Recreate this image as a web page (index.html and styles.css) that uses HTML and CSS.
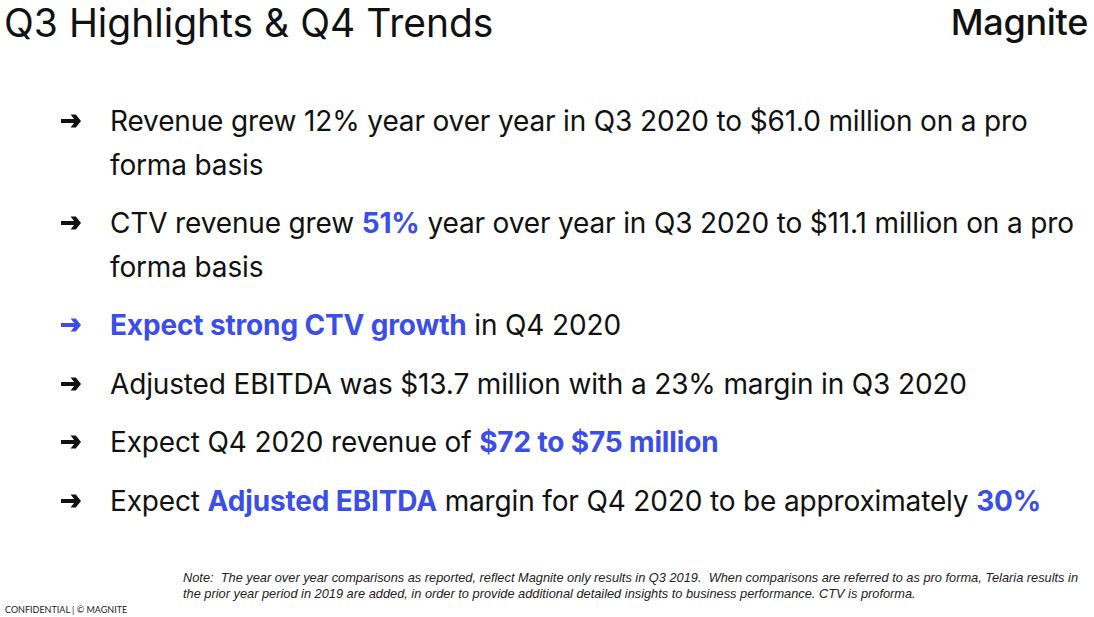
FILE: index.html
```html
<!DOCTYPE html>
<html lang="en">
<head>
<meta charset="utf-8">
<title>Q3 Highlights &amp; Q4 Trends</title>
<link rel="stylesheet" href="styles.css">
</head>
<body>
<div class="slide">
  <header class="header">
    <h1 class="title">Q3 Highlights &amp; Q4 Trends</h1>
    <div class="logo">Magnite</div>
  </header>
  <ul class="bullets">
    <li class="item">
      <svg class="arrow" viewBox="0 0 20 14"><path d="M0 5.1h13.2V0.6h1.6L20 7l-5.2 6.4h-1.6V8.9H0z M9.6 0.6h4.2L19.4 7l-5.6 6.4H9.6L14.6 7z" fill="currentColor"/></svg>
      <span class="text">Revenue grew 12% year over year in Q3 2020 to $61.0 million on a pro forma basis</span>
    </li>
    <li class="item">
      <svg class="arrow" viewBox="0 0 20 14"><path d="M0 5.1h13.2V0.6h1.6L20 7l-5.2 6.4h-1.6V8.9H0z M9.6 0.6h4.2L19.4 7l-5.6 6.4H9.6L14.6 7z" fill="currentColor"/></svg>
      <span class="text">CTV revenue grew <b class="hl">51%</b> year over year in Q3 2020 to $11.1 million on a pro forma basis</span>
    </li>
    <li class="item">
      <svg class="arrow blue" viewBox="0 0 20 14"><path d="M0 5.1h13.2V0.6h1.6L20 7l-5.2 6.4h-1.6V8.9H0z M9.6 0.6h4.2L19.4 7l-5.6 6.4H9.6L14.6 7z" fill="currentColor"/></svg>
      <span class="text"><b class="hl">Expect strong CTV growth</b> in Q4 2020</span>
    </li>
    <li class="item">
      <svg class="arrow" viewBox="0 0 20 14"><path d="M0 5.1h13.2V0.6h1.6L20 7l-5.2 6.4h-1.6V8.9H0z M9.6 0.6h4.2L19.4 7l-5.6 6.4H9.6L14.6 7z" fill="currentColor"/></svg>
      <span class="text">Adjusted EBITDA was $13.7 million with a 23% margin in Q3 2020</span>
    </li>
    <li class="item">
      <svg class="arrow" viewBox="0 0 20 14"><path d="M0 5.1h13.2V0.6h1.6L20 7l-5.2 6.4h-1.6V8.9H0z M9.6 0.6h4.2L19.4 7l-5.6 6.4H9.6L14.6 7z" fill="currentColor"/></svg>
      <span class="text">Expect Q4 2020 revenue of <b class="hl">$72 to $75 million</b></span>
    </li>
    <li class="item">
      <svg class="arrow" viewBox="0 0 20 14"><path d="M0 5.1h13.2V0.6h1.6L20 7l-5.2 6.4h-1.6V8.9H0z M9.6 0.6h4.2L19.4 7l-5.6 6.4H9.6L14.6 7z" fill="currentColor"/></svg>
      <span class="text">Expect <b class="hl">Adjusted EBITDA</b> margin for Q4 2020 to be approximately <b class="hl">30%</b></span>
    </li>
  </ul>
  <footer class="footer">
    <div class="confidential">CONFIDENTIAL | © MAGNITE</div>
    <p class="note">Note:&nbsp; The year over year comparisons as reported, reflect Magnite only results in Q3 2019.&nbsp; When comparisons are referred to as pro forma, Telaria results in the prior year period in 2019 are added, in order to provide additional detailed insights to business performance. CTV is proforma.</p>
  </footer>
</div>
</body>
</html>
```

FILE: styles.css
```css
html, body {
  margin: 0;
  padding: 0;
  background: #ffffff;
}
body {
  font-family: "Inter", "DejaVu Sans", sans-serif;
  color: #111111;
}
.slide {
  width: 1094px;
  height: 617px;
  display: flex;
  flex-direction: column;
  overflow: hidden;
}
.header {
  display: flex;
  justify-content: space-between;
  align-items: flex-start;
  padding: 0 6px 0 4px;
}
.title {
  margin: -1px 0 0 0;
  font-weight: 400;
  font-size: 39px;
  line-height: 47px;
}
.logo {
  font-size: 36px;
  font-weight: 500;
  letter-spacing: -0.3px;
  line-height: 44px;
}
.bullets {
  list-style: none;
  margin: 54px 0 0 0;
  padding: 0 2px 0 61px;
  display: flex;
  flex-direction: column;
  gap: 15px;
}
.item {
  display: flex;
  align-items: flex-start;
  font-size: 28px;
  line-height: 43.5px;
  letter-spacing: -0.15px;
}
.arrow {
  width: 20px;
  height: 14px;
  flex: none;
  margin-top: 14px;
  margin-right: 29px;
  color: #111111;
}
.arrow.blue {
  color: #3b4ee8;
}
.hl {
  color: #3b4ee8;
  font-weight: 700;
}
.footer {
  margin-top: auto;
  display: flex;
  align-items: flex-end;
  padding: 0 14px 2px 5px;
}
.confidential {
  font-family: "Lato", "Liberation Sans", sans-serif;
  font-size: 9px;
  line-height: 11px;
  color: #222;
  width: 178px;
  flex: none;
}
.note {
  margin: 0 0 13px 0;
  font-family: "Liberation Sans", Arial, sans-serif;
  font-style: italic;
  font-size: 12.8px;
  line-height: 16px;
  color: #222;
}
```
